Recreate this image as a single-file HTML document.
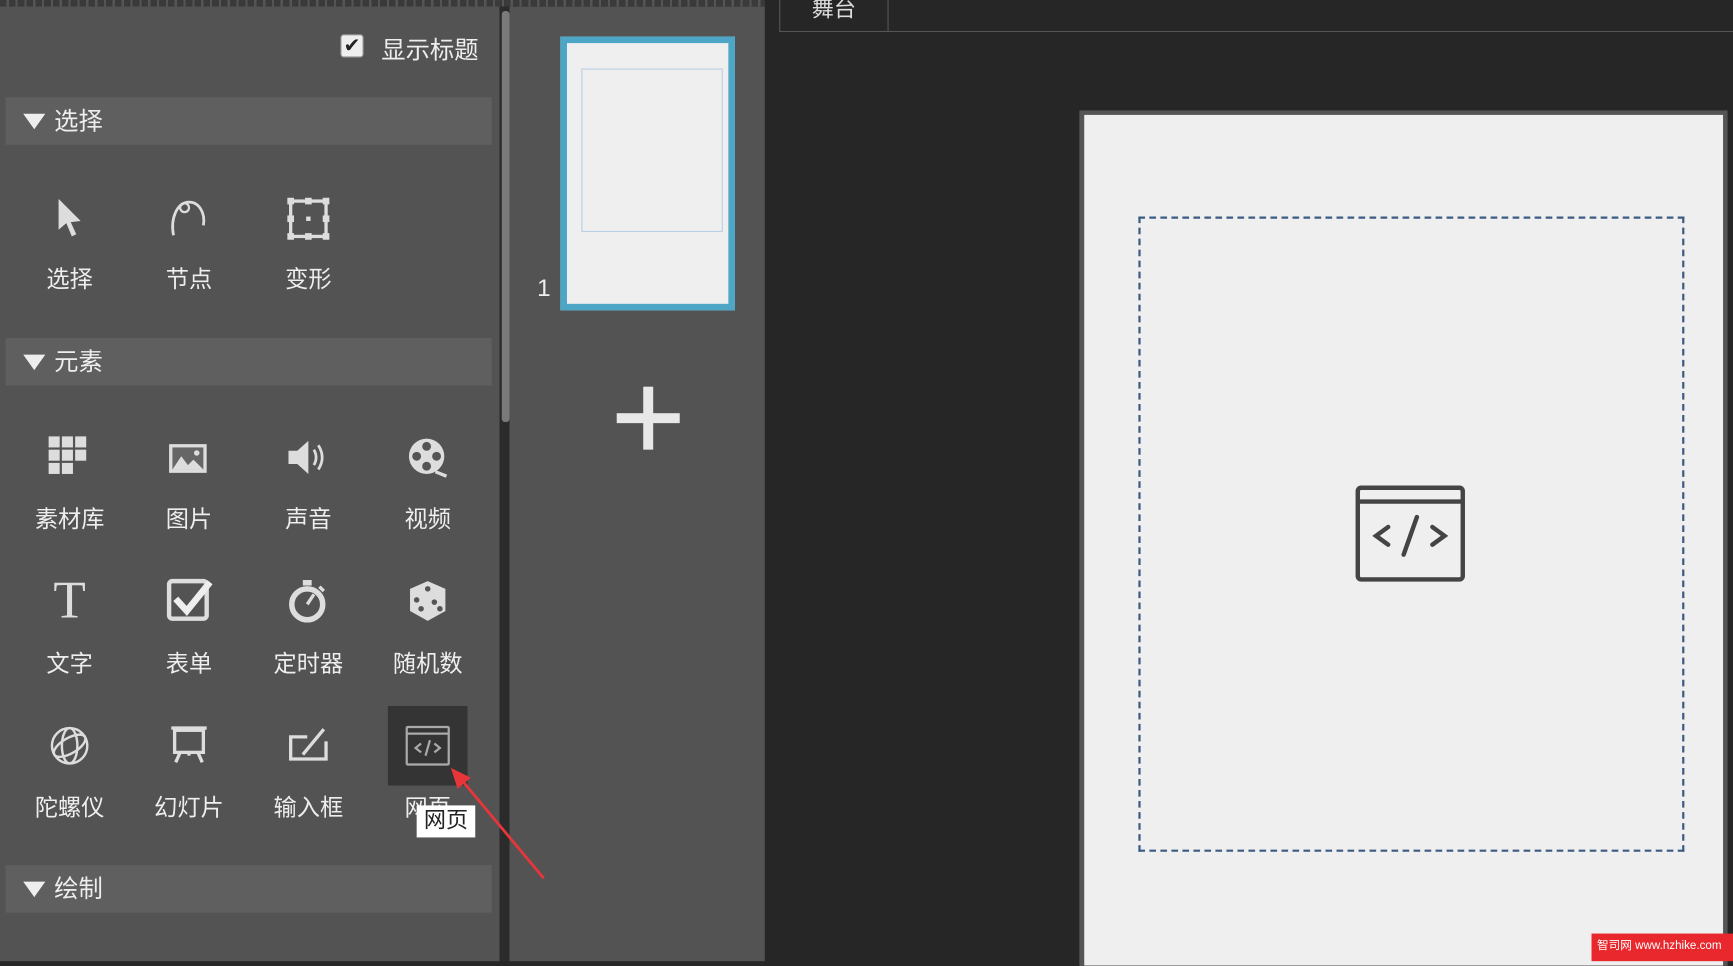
<!DOCTYPE html>
<html><head><meta charset="utf-8"><style>
html,body{margin:0;padding:0;width:1733px;height:959px;overflow:hidden;background:#262626;}
#w{position:absolute;left:0;top:0;width:1568px;height:870px;transform:scale(1.10523,1.1048);transform-origin:0 0;font-family:"Liberation Sans","Noto Sans CJK SC",sans-serif;color:#eee;}
.a{position:absolute;}
.hd{position:absolute;left:5px;width:440px;height:43px;background:#5f5f5f;font-size:22px;line-height:43px;}
.hd .t{position:absolute;left:16px;top:15px;width:0;height:0;border-left:10px solid transparent;border-right:10px solid transparent;border-top:14px solid #eee;}
.hd span{position:absolute;left:44px;}
.lb{position:absolute;width:100px;text-align:center;font-size:21px;color:#eee;}
</style></head><body><div id="w">
<div class="a" style="left:0;top:0;width:452px;height:870px;background:#535353"></div>
<div class="a" style="left:0;top:0;width:692px;height:6px;background:repeating-linear-gradient(90deg,#3a3a3a 0 6px,#555 6px 8px)"></div>
<div class="a" style="left:452px;top:6px;width:9px;height:864px;background:#2b2b2b"></div>
<div class="a" style="left:454px;top:10px;width:7px;height:372px;background:#7a7a7a;border-radius:3px"></div>
<div class="a" style="left:461px;top:6px;width:231px;height:864px;background:#535353"></div>
<div class="a" style="left:705px;top:0;width:97px;height:28px;border:1px solid #555;border-top:none;background:#262626;text-align:center;font-size:20px;line-height:18px;color:#ddd">舞台</div>
<div class="a" style="left:803px;top:28px;width:765px;height:1px;background:#555"></div>
<div class="a" style="left:977px;top:100px;width:578px;height:770px;background:#efefef;border:4px solid #555;border-bottom:none"></div>
<div class="a" style="left:1030px;top:196px;width:490px;height:571px;border:2.5px dashed #3b5b82"></div>
<svg class="a" style="left:1226px;top:439px" width="100" height="88" viewBox="0 0 100 88"><rect x="2.5" y="2.5" width="95" height="83" rx="3" fill="none" stroke="#444" stroke-width="4"/><line x1="2" y1="15" x2="98" y2="15" stroke="#444" stroke-width="4"/><path d="M30 38 L19 46 L30 54 M70 38 L81 46 L70 54 M56 29 L44 63" fill="none" stroke="#444" stroke-width="4" stroke-linecap="round"/></svg>
<div class="a" style="left:308px;top:31px;width:19px;height:19px;background:#eee;border-radius:3px;border:1px solid #999;color:#222;font-size:18px;line-height:19px;text-align:center">✔</div>
<div class="a" style="left:345px;top:28px;font-size:22px">显示标题</div>
<div class="hd" style="top:88px"><i class="t"></i><span>选择</span></div>
<div class="hd" style="top:306px"><i class="t"></i><span>元素</span></div>
<div class="hd" style="top:783px"><i class="t"></i><span>绘制</span></div>
<svg class="a" style="left:50px;top:178px" width="28" height="40"><path d="M3 2 L3 30 L10 24 L15 36 L19 34 L14 23 L23 22 Z" fill="#ddd"/></svg>
<svg class="a" style="left:152px;top:178px" width="38" height="38"><path d="M5 35 C2 20 8 6 18 5 C28 4 34 15 32 26" fill="none" stroke="#ddd" stroke-width="2.5"/><circle cx="15" cy="10" r="4" fill="none" stroke="#ddd" stroke-width="2"/></svg>
<svg class="a" style="left:259px;top:178px" width="40" height="40"><rect x="4" y="4" width="32" height="32" fill="none" stroke="#ddd" stroke-width="3"/><rect x="1" y="1" width="6" height="6" fill="#ddd"/><rect x="33" y="1" width="6" height="6" fill="#ddd"/><rect x="1" y="33" width="6" height="6" fill="#ddd"/><rect x="33" y="33" width="6" height="6" fill="#ddd"/><rect x="17" y="1" width="6" height="6" fill="#ddd"/><rect x="17" y="33" width="6" height="6" fill="#ddd"/><rect x="1" y="17" width="6" height="6" fill="#ddd"/><rect x="33" y="17" width="6" height="6" fill="#ddd"/><rect x="18" y="18" width="4" height="4" fill="#ddd"/></svg>
<div class="lb" style="left:13px;top:237px">选择</div>
<div class="lb" style="left:121px;top:237px">节点</div>
<div class="lb" style="left:229px;top:237px">变形</div>
<svg class="a" style="left:43px;top:394px" width="40" height="40" fill="#ddd"><rect x="1" y="1" width="10" height="10"/><rect x="13" y="1" width="10" height="10"/><rect x="25" y="1" width="10" height="10"/><rect x="1" y="13" width="10" height="10"/><rect x="13" y="13" width="10" height="10"/><rect x="25" y="13" width="10" height="10"/><rect x="1" y="25" width="10" height="10"/><rect x="13" y="25" width="10" height="10"/></svg>
<svg class="a" style="left:151px;top:398px" width="40" height="34"><rect x="2" y="4" width="34" height="26" fill="#ddd"/><rect x="5" y="7" width="28" height="20" fill="#666"/><path d="M5 27 L13 15 L19 23 L24 18 L33 27 Z" fill="#ddd"/><circle cx="27" cy="12" r="2.5" fill="#ddd"/></svg>
<svg class="a" style="left:259px;top:396px" width="40" height="36"><path d="M2 12 H10 L20 3 V33 L10 24 H2 Z" fill="#ddd"/><path d="M25 11 Q29 18 25 25 M29 7 Q36 18 29 29" fill="none" stroke="#ddd" stroke-width="2.5"/></svg>
<svg class="a" style="left:368px;top:395px" width="40" height="40"><circle cx="18" cy="18" r="16" fill="#ddd"/><circle cx="18" cy="9" r="4" fill="#555"/><circle cx="18" cy="27" r="4" fill="#555"/><circle cx="9" cy="18" r="4" fill="#555"/><circle cx="27" cy="18" r="4" fill="#555"/><path d="M26 32 L36 36" stroke="#ddd" stroke-width="3"/></svg>
<div class="lb" style="left:13px;top:454px">素材库</div>
<div class="lb" style="left:121px;top:454px">图片</div>
<div class="lb" style="left:229px;top:454px">声音</div>
<div class="lb" style="left:337px;top:454px">视频</div>
<div class="a" style="left:43px;top:518px;width:40px;text-align:center;font-family:'Liberation Serif',serif;font-size:48px;color:#ddd;line-height:52px">T</div>
<svg class="a" style="left:150px;top:522px" width="46" height="42"><rect x="3" y="4" width="34" height="34" rx="3" fill="none" stroke="#ddd" stroke-width="4"/><path d="M9 20 L19 31 L40 5" fill="none" stroke="#eee" stroke-width="6"/></svg>
<svg class="a" style="left:259px;top:522px" width="40" height="44"><circle cx="19" cy="25" r="14" fill="none" stroke="#ddd" stroke-width="5"/><rect x="15" y="3" width="8" height="5" fill="#ddd"/><path d="M19 25 L25 16" stroke="#ddd" stroke-width="3"/><path d="M30 9 L34 13" stroke="#ddd" stroke-width="3"/></svg>
<svg class="a" style="left:367px;top:523px" width="42" height="42"><path d="M4 10 L20 3 L36 10 L36 30 L20 39 L4 30 Z" fill="#ddd"/><circle cx="20" cy="10" r="2.5" fill="#555"/><circle cx="10" cy="20" r="2.5" fill="#555"/><circle cx="14" cy="28" r="2.5" fill="#555"/><circle cx="26" cy="22" r="2.5" fill="#555"/><circle cx="31" cy="28" r="2.5" fill="#555"/></svg>
<div class="lb" style="left:13px;top:585px">文字</div>
<div class="lb" style="left:121px;top:585px">表单</div>
<div class="lb" style="left:229px;top:585px">定时器</div>
<div class="lb" style="left:337px;top:585px">随机数</div>
<svg class="a" style="left:45px;top:657px" width="38" height="38" fill="none" stroke="#ddd" stroke-width="2.2"><circle cx="18" cy="18" r="16"/><ellipse cx="18" cy="18" rx="7" ry="16"/><ellipse cx="18" cy="18" rx="16" ry="7" transform="rotate(-30 18 18)"/></svg>
<svg class="a" style="left:153px;top:656px" width="38" height="40" fill="none" stroke="#ddd" stroke-width="3"><path d="M2 3 H34"/><rect x="5" y="5" width="26" height="20"/><path d="M10 25 L6 34 M26 25 L30 34 M18 25 V28"/></svg>
<svg class="a" style="left:260px;top:657px" width="40" height="36" fill="none" stroke="#ddd" stroke-width="3"><path d="M18 10 H3 V30 H35 V14 M14 26 L33 3"/></svg>
<div class="a" style="left:351px;top:639px;width:72px;height:72px;background:#343434"></div>
<svg class="a" style="left:366px;top:656px" width="42" height="38" fill="none" stroke="#aaa" stroke-width="2"><rect x="2" y="2" width="38" height="34" rx="1"/><line x1="2" y1="8" x2="40" y2="8"/><path d="M15 17 L10 21 L15 25 M27 17 L32 21 L27 25 M23 14 L19 28"/></svg>
<div class="lb" style="left:13px;top:715px">陀螺仪</div>
<div class="lb" style="left:121px;top:715px">幻灯片</div>
<div class="lb" style="left:229px;top:715px">输入框</div>
<div class="lb" style="left:337px;top:715px">网页</div>
<div class="a" style="left:377px;top:729px;width:53px;height:29px;background:#fff;color:#222;font-size:20px;line-height:29px;text-align:center">网页</div>
<svg class="a" style="left:400px;top:690px" width="100" height="110"><line x1="92" y1="105" x2="16" y2="14" stroke="#e8353a" stroke-width="2.5"/><path d="M8 5 L26 14 L14 24 Z" fill="#e8353a"/></svg>
<div class="a" style="left:507px;top:33px;width:146px;height:236px;border:6px solid #4ea6c6;background:#efefef"></div>
<div class="a" style="left:526px;top:62px;width:126px;height:146px;border:1px solid #b9cfe3"></div>
<div class="a" style="left:486px;top:248px;font-size:22px;color:#eee">1</div>
<div class="a" style="left:558px;top:374px;width:57px;height:9px;background:#e8e8e8"></div>
<div class="a" style="left:582px;top:350px;width:9px;height:57px;background:#e8e8e8"></div>
<div class="a" style="left:1440px;top:845px;width:128px;height:25px;background:#e8282c;color:#fff;font-size:10.5px;line-height:23px;padding-left:5px;box-sizing:border-box;white-space:nowrap;overflow:hidden">智司网 www.hzhike.com</div>
</div></body></html>
